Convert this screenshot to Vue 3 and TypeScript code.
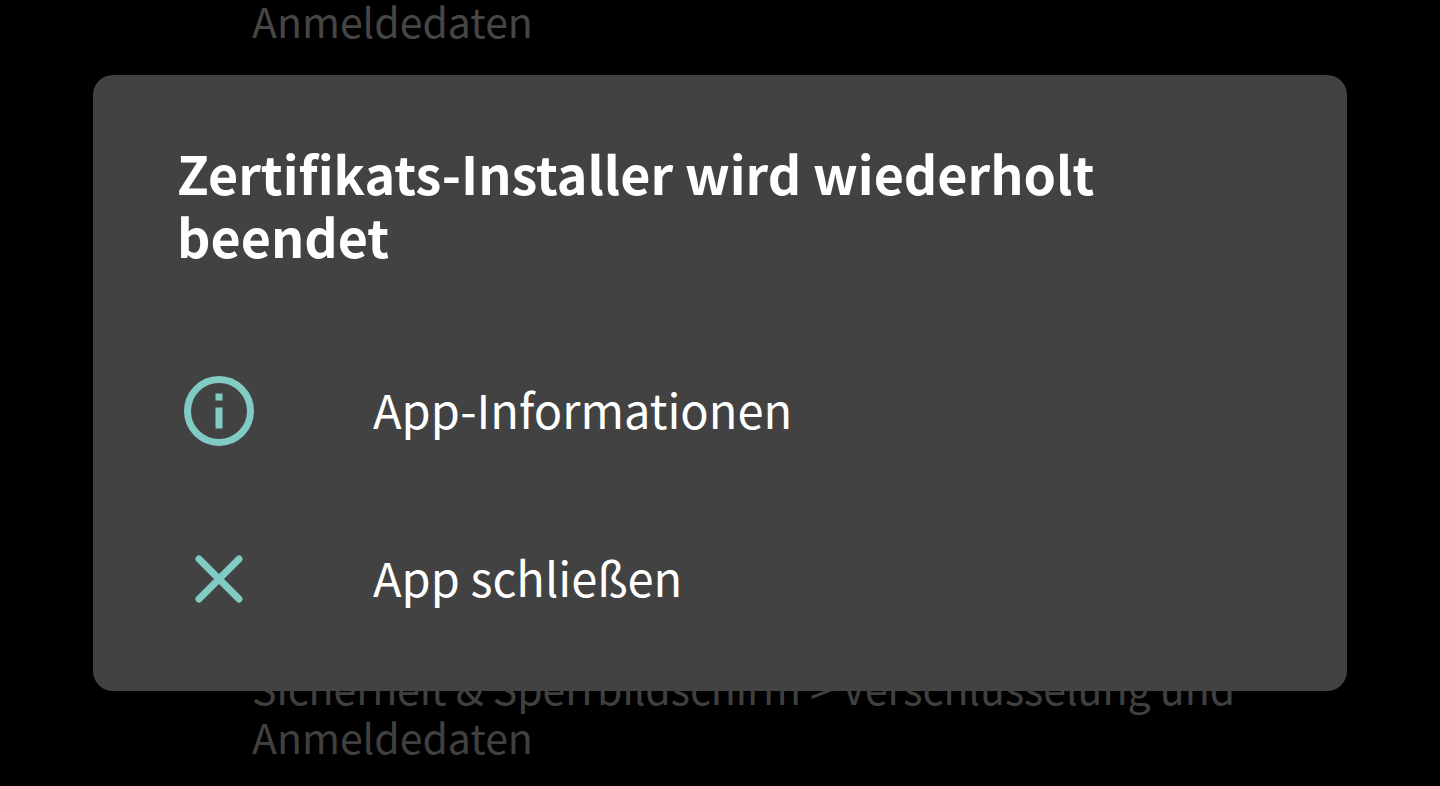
<script setup lang="ts">
type Action = { id: 'info' | 'close'; label: string }

const actions: Action[] = [
  { id: 'info', label: 'App-Informationen' },
  { id: 'close', label: 'App schließen' },
]
</script>

<template>
  <div class="screen">
    <p class="setting above">Anmeldedaten</p>
    <section class="dialog" role="dialog" aria-modal="true" aria-labelledby="dialog-title">
      <h1 id="dialog-title">Zertifikats-Installer wird wiederholt beendet</h1>
      <div class="actions">
        <button v-for="action in actions" :key="action.id" type="button" class="action">
          <svg v-if="action.id === 'info'" class="icon" viewBox="0 0 84 84" aria-hidden="true">
            <circle cx="42" cy="42" r="31.5" fill="none" stroke="currentColor" stroke-width="7" />
            <path d="M38.5 24.5h7v7h-7zM38.5 38.5h7v21h-7z" fill="currentColor" />
          </svg>
          <svg v-else class="icon" viewBox="0 0 84 84" aria-hidden="true">
            <path d="M22 22l40 40M62 22L22 62" fill="none" stroke="currentColor" stroke-width="7" stroke-linecap="round" />
          </svg>
          <span class="label">{{ action.label }}</span>
        </button>
      </div>
    </section>
    <p class="setting below">Sicherheit &amp; Sperrbildschirm &gt; Verschlüsselung und Anmeldedaten</p>
  </div>
</template>

<style>
body {
  margin: 0;
  background: #000;
}
</style>

<style scoped>
.screen {
  min-height: 100vh;
  overflow: hidden;
  background: #000;
  font-family: "Noto Sans CJK SC", "Noto Sans", sans-serif;
}
.setting {
  margin: 0;
  padding: 0 180px 0 252px;
  color: #404040;
  font-size: 41px;
  line-height: 49px;
}
.above {
  margin-top: -4px;
  color: #464646;
}
.below {
  margin-top: -28px;
}
.dialog {
  position: relative;
  box-sizing: border-box;
  margin: 30px 93px 0;
  padding: 66px 84px 28px;
  border-radius: 20px;
  background: #424242;
}
h1 {
  margin: 0;
  color: #fff;
  font-size: 52px;
  font-weight: 700;
  line-height: 63px;
}
.actions {
  margin-top: 60px;
}
.action {
  display: flex;
  align-items: center;
  gap: 112px;
  width: 100%;
  height: 168px;
  padding: 0;
  border: 0;
  background: none;
  color: #fff;
  font: inherit;
  font-size: 47px;
  line-height: 60px;
  text-align: left;
}
.label {
  padding-bottom: 4px;
}
.icon {
  flex: none;
  width: 84px;
  height: 84px;
  color: #80cbc4;
}
</style>
